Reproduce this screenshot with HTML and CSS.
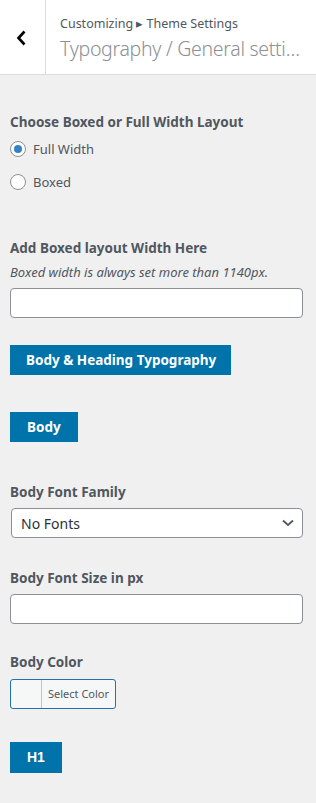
FILE: index.html
```html
<!DOCTYPE html>
<html lang="en">
<head>
<meta charset="utf-8">
<title>Customizer</title>
<link rel="stylesheet" href="styles.css">
</head>
<body>
<div class="header">
  <button class="back" aria-label="Back">
    <svg width="12" height="16" viewBox="0 0 12 16"><polyline points="8.5,1.5 2.5,8 8.5,14.5" fill="none" stroke="#000" stroke-width="2.6"/></svg>
  </button>
  <div class="head-text">
    <span class="crumb">Customizing ▸ Theme Settings</span>
    <h3 class="panel-title">Typography / General settings</h3>
  </div>
</div>
<ul class="controls">
  <li class="control c-layout">
    <span class="label">Choose Boxed or Full Width Layout</span>
    <label class="radio-row"><span class="radio checked"></span>Full Width</label>
    <label class="radio-row"><span class="radio"></span>Boxed</label>
  </li>
  <li class="control c-width">
    <span class="label">Add Boxed layout Width Here</span>
    <span class="desc">Boxed width is always set more than 1140px.</span>
    <input class="text-input" type="text">
  </li>
  <li class="control c-head1">
    <span class="section-btn">Body &amp; Heading Typography</span>
  </li>
  <li class="control c-head2">
    <span class="section-btn">Body</span>
  </li>
  <li class="control c-family">
    <span class="label">Body Font Family</span>
    <div class="select">
      <span>No Fonts</span>
      <svg width="12" height="8" viewBox="0 0 12 8"><polyline points="1,1.5 6,6 11,1.5" fill="none" stroke="#50575e" stroke-width="1.7"/></svg>
    </div>
  </li>
  <li class="control c-size">
    <span class="label">Body Font Size in px</span>
    <input class="text-input" type="text">
  </li>
  <li class="control c-color">
    <span class="label">Body Color</span>
    <div class="color-btn"><span class="swatch"></span><span class="color-text">Select Color</span></div>
  </li>
  <li class="control c-h1">
    <span class="section-btn h1">H1</span>
  </li>
</ul>
</body>
</html>
```
FILE: styles.css
```css
* { box-sizing: border-box; }
html, body {
  margin: 0;
  padding: 0;
  background: #f0f0f1;
  font-family: "Noto Sans", sans-serif;
  color: #50575e;
}
.header {
  display: flex;
  height: 75px;
  background: #fff;
  border-bottom: 1px solid #dcdcde;
}
.back {
  width: 46px;
  height: 74px;
  padding: 0;
  border: none;
  border-right: 1px solid #dcdcde;
  background: #fff;
  display: flex;
  align-items: center;
  justify-content: center;
  padding-right: 2px;
  padding-top: 1px;
}
.head-text {
  flex: 1;
  min-width: 0;
  padding: 14px 12px 0 14px;
  display: flex;
  flex-direction: column;
}
.crumb {
  font-size: 12.5px;
  line-height: 20px;
  color: #50575e;
}
.panel-title {
  margin: 0;
  font-size: 19.5px;
  letter-spacing: -0.3px;
  line-height: 30px;
  font-weight: 300;
  color: #8c8f94;
  white-space: nowrap;
  overflow: hidden;
  text-overflow: ellipsis;
}
.controls {
  list-style: none;
  margin: 0;
  padding: 0 13px 0 10px;
}
.control { display: flex; flex-direction: column; align-items: flex-start; }
.label {
  font-size: 13.5px;
  line-height: 20px;
  font-weight: 700;
  color: #50575e;
}
.c-layout { padding-top: 37px; }
.radio-row {
  display: flex;
  align-items: center;
  gap: 7px;
  font-size: 13px;
  line-height: 20px;
  color: #50575e;
  height: 20px;
}
.c-layout .label { margin-bottom: 7px; }
.c-layout .radio-row + .radio-row { margin-top: 13px; }
.radio {
  width: 16px;
  height: 16px;
  border-radius: 50%;
  border: 1px solid #8c8f94;
  background: #fff;
  display: flex;
  align-items: center;
  justify-content: center;
}
.radio.checked::after {
  content: "";
  width: 8px;
  height: 8px;
  border-radius: 50%;
  background: #3582c4;
}
.c-width { padding-top: 46px; }
.desc {
  font-size: 13px;
  line-height: 16px;
  font-style: italic;
  margin-top: 6px;
  margin-bottom: 8px;
}
.text-input {
  width: 100%;
  height: 30px;
  margin: 0;
  border: 1px solid #8c8f94;
  border-radius: 4px;
  background: #fff;
}
.c-head1 { padding-top: 27px; }
.section-btn {
  display: inline-block;
  background: #0073aa;
  color: #fff;
  font-weight: 700;
  font-size: 13.5px;
  line-height: 30px;
  height: 30px;
  padding: 0 17px;
}
.c-head1 .section-btn { padding: 0 15px 0 16px; }
.c-head2 { padding-top: 37px; }
.section-btn.h1 { font-family: "Liberation Sans", sans-serif; font-size: 14px; padding: 0 17px; height: 31px; line-height: 31px; }
.c-family { padding-top: 40px; }
.c-family .label { margin-bottom: 6px; }
.select {
  margin-left: 1px;
  width: calc(100% - 1px);
  height: 30px;
  border: 1px solid #8c8f94;
  border-radius: 4px;
  background: #fff;
  display: flex;
  align-items: center;
  justify-content: space-between;
  padding: 0 8px 0 9px;
  font-size: 14px;
  color: #2c3338;
}
.c-size { padding-top: 30px; }
.c-size .label { margin-bottom: 6px; }
.c-color { padding-top: 28px; }
.c-color .label { margin-bottom: 7px; }
.color-btn {
  display: flex;
  height: 30px;
  border: 1px solid #2271b1;
  border-radius: 3px;
  background: #f6f7f7;
  overflow: hidden;
}
.swatch {
  width: 31px;
  border-right: 1px solid #c3c4c7;
}
.color-text {
  font-size: 11px;
  line-height: 28px;
  padding: 0 6px 0 6px;
  color: #50575e;
}
.c-h1 { padding-top: 33px; }
```
